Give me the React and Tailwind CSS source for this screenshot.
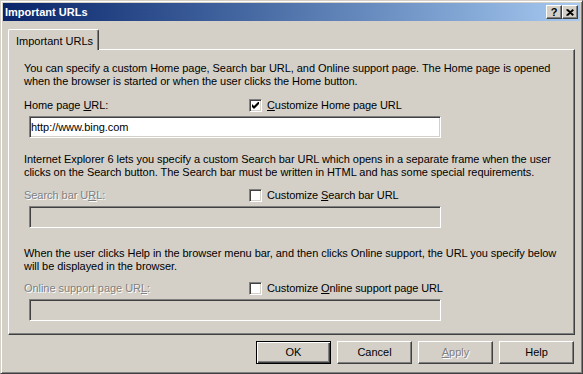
import React from 'react';

const raised =
    'border border-t-white border-l-white border-r-[#404040] border-b-[#404040] shadow-[inset_-1px_-1px_0_#808080]';
const sunken =
    'border border-t-[#808080] border-l-[#808080] border-r-white border-b-white shadow-[inset_1px_1px_0_#404040,inset_-1px_-1px_0_#d4d0c8]';
const disabledText = 'text-[#808080] [text-shadow:1px_1px_0_#fff]';

const CheckMark = () => (
    <svg width="7" height="7" viewBox="0 0 7 7" className="block">
        <polygon points="0,2 2,4 7,-1 7,2 2,7 0,5" fill="#000" />
    </svg>
);

const Checkbox = ({ checked }) => (
    <div className={`w-[13px] h-[13px] bg-white flex items-center justify-center ${sunken}`}>
        {checked && <CheckMark />}
    </div>
);

const Field = ({ value, disabled }) => (
    <div
        className={`ml-[5px] w-[412px] h-[22px] flex items-center pl-[1px] ${sunken} ${
            disabled ? 'bg-[#d4d0c8]' : 'bg-white'
        }`}
    >
        {value}
    </div>
);

const LabelRow = ({ label, check, checked, disabled, className = '' }) => (
    <div className={`flex items-center h-[13px] ${className}`}>
        <div className={`w-[225px] leading-[13px] ${disabled ? disabledText : ''}`}>{label}</div>
        <Checkbox checked={checked} />
        <div className="ml-[5px] leading-[13px] tracking-[-0.1px]">{check}</div>
    </div>
);

const Button = ({ children, isDefault, disabled }) => (
    <div
        className={`w-[75px] h-[23px] flex items-center justify-center ${
            isDefault
                ? 'border border-black shadow-[inset_1px_1px_0_#fff,inset_-1px_-1px_0_#404040,inset_-2px_-2px_0_#808080]'
                : raised
        } ${disabled ? disabledText : ''}`}
    >
        {children}
    </div>
);

const TitleButton = ({ children }) => (
    <div className={`w-[16px] h-[14px] bg-[#d4d0c8] flex items-center justify-center ${raised}`}>
        {children}
    </div>
);

export default function App() {
    return (
        <div className="w-[583px] h-[374px] bg-[#d4d0c8] p-[2px] border border-t-[#d4d0c8] border-l-[#d4d0c8] border-r-[#404040] border-b-[#404040] shadow-[inset_1px_1px_0_#fff,inset_-1px_-1px_0_#808080] font-['Liberation_Sans',Arial,sans-serif] text-[11px] text-black flex flex-col">
            {/* title bar */}
            <div className="h-[18px] bg-linear-to-r from-[#0a246a] to-[#a6caf0] flex items-center justify-between pl-[2px] pr-[2px]">
                <span className="font-bold text-white text-[11px]">Important URLs</span>
                <div className="flex">
                    <TitleButton>
                        <span className="font-bold text-[11px] leading-none text-black">?</span>
                    </TitleButton>
                    <TitleButton>
                        <svg width="8" height="7" viewBox="0 0 8 7">
                            <path d="M0.5 0.5 L7 6.5 M1.5 0.5 L7.5 6 M7 0.5 L0.5 6.5 M7.5 1 L1.5 6.5" stroke="#000" strokeWidth="1.2" />
                        </svg>
                    </TitleButton>
                </div>
            </div>

            {/* tab and panel */}
            <div className="px-[5px] mt-[8px]">
                <div className="flex">
                    <div className="relative z-10 w-[91px] h-[21px] -mb-[1px] bg-[#d4d0c8] border-l border-t border-l-white border-t-white border-r border-r-[#404040] shadow-[inset_-1px_0_0_#808080] rounded-t-[2px] flex items-start pt-[3px] pl-[7px]">
                        Important URLs
                    </div>
                </div>
                <div className="h-[286px] border border-t-white border-l-white border-r-[#404040] border-b-[#404040] shadow-[inset_-1px_-1px_0_#808080] pt-[12px] pl-[15px] tracking-[-0.05px]">
                    <p className="leading-[13px]">
                        You can specify a custom Home page, Search bar URL, and Online support page. The Home page is opened
                        <br />
                        when the browser is started or when the user clicks the Home button.
                    </p>
                    <LabelRow
                        className="mt-[11px]"
                        label={<>Home page <u>U</u>RL:</>}
                        check={<><u>C</u>ustomize Home page URL</>}
                        checked
                    />
                    <div className="mt-[4px]">
                        <Field value="http://www.bing.com" />
                    </div>

                    <p className="leading-[13px] mt-[15px]">
                        Internet Explorer 6 lets you specify a custom Search bar URL which opens in a separate frame when the user
                        <br />
                        clicks on the Search button. The Search bar must be written in HTML and has some special requirements.
                    </p>
                    <LabelRow
                        className="mt-[10px]"
                        label={<>Search bar U<u>R</u>L:</>}
                        check={<>Customize <u>S</u>earch bar URL</>}
                        disabled
                    />
                    <div className="mt-[4px]">
                        <Field disabled />
                    </div>

                    <p className="leading-[13px] mt-[19px]">
                        When the user clicks Help in the browser menu bar, and then clicks Online support, the URL you specify below
                        <br />
                        will be displayed in the browser.
                    </p>
                    <LabelRow
                        className="mt-[9px]"
                        label={<>Online support page UR<u>L</u>:</>}
                        check={<>Customize <u>O</u>nline support page URL</>}
                        disabled
                    />
                    <div className="mt-[4px]">
                        <Field disabled />
                    </div>
                </div>
            </div>

            {/* buttons */}
            <div className="flex justify-end gap-[6px] mt-[6px] pr-[6px]">
                <Button isDefault>OK</Button>
                <Button>Cancel</Button>
                <Button disabled>
                    <span><u>A</u>pply</span>
                </Button>
                <Button>Help</Button>
            </div>
        </div>
    );
}
